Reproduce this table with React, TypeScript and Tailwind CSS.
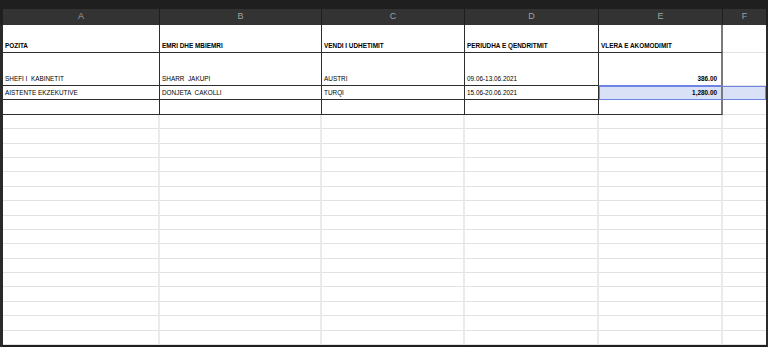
const COLS = ["A", "B", "C", "D", "E", "F"];

const DARK = "border-[#2e2e2e]";
const LIGHT = "border-[#e2e2e2]";

type Row = { h: string; cells: string[]; bold?: boolean; selected?: boolean };

const TABLE: Row[] = [
  { h: "h-[28px]", bold: true, cells: ["POZITA", "EMRI DHE MBIEMRI", "VENDI I UDHETIMIT", "PERIUDHA E QENDRITMIT", "VLERA E AKOMODIMIT", ""] },
  { h: "h-[33px]", cells: ["SHEFI I  KABINETIT", "SHARR  JAKUPI", "AUSTRI", "09.06-13.06.2021", "386.00", ""] },
  { h: "h-[14px]", selected: true, cells: ["AISTENTE EKZEKUTIVE", "DONJETA  CAKOLLI", "TURQI", "15.06-20.06.2021", "1,280.00", ""] },
  { h: "h-[15px]", cells: ["", "", "", "", "", ""] },
];

const GRID = "grid grid-cols-[157px_162px_143px_134px_124px_43px]";

function cellClass(r: number, c: number, row: Row) {
  // column F sits outside the bordered table
  if (c === 5) {
    if (row.selected) return "border-y border-r border-[#6d84e4] bg-[#d8e1f6]";
    return `border-b ${LIGHT}`;
  }
  if (c === 4) {
    const base = "border-r-2 border-r-[#7a7a7a]";
    if (row.selected) return `${base} border-y border-l border-y-[#6d84e4] border-l-[#6d84e4] bg-[#d8e1f6] justify-end pr-[4px]`;
    if (r === 1) return `${base} border-b border-b-[#6d84e4] justify-end pr-[4px]`;
    return `${base} border-b border-b-[#2e2e2e]`;
  }
  return `border-r border-b ${DARK}`;
}

export default function App() {
  return (
    <div className="w-[768px] h-[347px] bg-[#1f1f1f] flex flex-col overflow-hidden" style={{ fontFamily: '"Liberation Sans", Arial, sans-serif' }}>
      <div className="h-[9px] shrink-0 bg-[#1f1f1f]" />

      {/* column headers */}
      <div className="h-[16px] shrink-0 flex">
        <div className="w-[3px] bg-[#1f1f1f]" />
        <div className={GRID}>
          {COLS.map((c, i) => (
            <div key={c} className={`flex items-center justify-center bg-[#333333] text-[9px] text-[#a0a0a0] ${i < 5 ? "border-r border-[#1e1e1e]" : ""}`}>
              {c}
            </div>
          ))}
        </div>
      </div>

      <div className="flex flex-1">
        <div className="w-[3px] bg-[#2a2a2a]" />
        <div className="bg-white flex flex-col w-[763px] h-[320px]">
          {TABLE.map((row, r) => (
            <div key={r} className={`${GRID} ${row.h}`}>
              {row.cells.map((t, c) => (
                <div
                  key={c}
                  className={`flex items-end pl-[2px] pb-[2px] text-[6.4px] leading-[8px] text-black whitespace-pre overflow-hidden ${row.bold || c === 4 ? "font-bold" : ""} ${cellClass(r, c, row)}`}
                >
                  {t}
                </div>
              ))}
            </div>
          ))}

          {/* empty sheet rows */}
          {Array.from({ length: 16 }).map((_, r) => (
            <div key={r} className={`${GRID} h-[14.4px]`}>
              {COLS.map((c, i) => (
                <div key={c} className={`border-b ${LIGHT} ${i < 5 ? "border-r-2 border-r-[#ebebeb]" : ""}`} />
              ))}
            </div>
          ))}
        </div>
        <div className="w-[2px] bg-[#2a2a2a]" />
      </div>
    </div>
  );
}
